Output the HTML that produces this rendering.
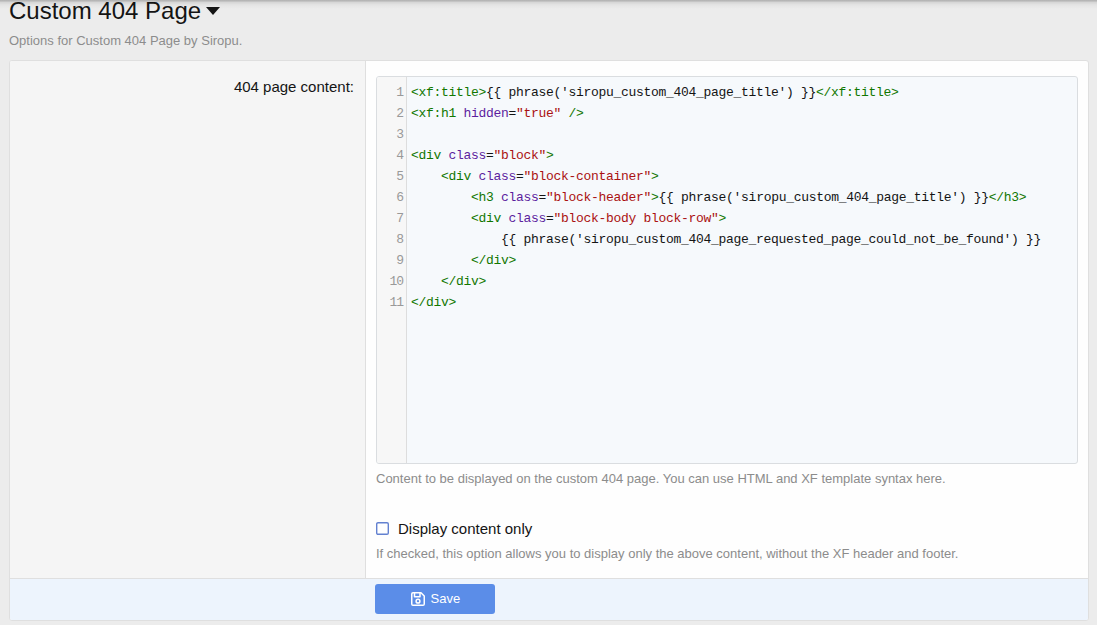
<!DOCTYPE html>
<html><head><meta charset="utf-8">
<style>
*{box-sizing:border-box;margin:0;padding:0}
html,body{width:1097px;height:625px;overflow:hidden}
body{background:#ececec;font-family:"Liberation Sans",sans-serif;color:#141414;position:relative}
.shadow{position:absolute;left:0;top:0;width:1097px;height:10px;background:linear-gradient(rgba(0,0,0,.23) 0.5px,rgba(0,0,0,.17) 1.5px,rgba(0,0,0,.09) 2.5px,rgba(0,0,0,.045) 4.5px,rgba(0,0,0,.02) 6.5px,rgba(0,0,0,0) 9px);z-index:5}
.title{position:absolute;left:9px;top:-4px;font-size:24px;line-height:30px;color:#141414;white-space:nowrap}
.caret{display:inline-block;width:0;height:0;border-left:7px solid transparent;border-right:7px solid transparent;border-top:8px solid #141414;vertical-align:middle;margin-left:5px;position:relative;top:-2px}
.desc{position:absolute;left:9px;top:32px;font-size:13px;line-height:18px;color:#8c8c8c;white-space:nowrap}
.block{position:absolute;left:9px;top:60px;width:1080px;height:561px;border:1px solid #dfdfdf;border-radius:3px;background:#fefefe;overflow:hidden}
.dt{position:absolute;left:0;top:0;width:356px;height:517px;background:#f5f5f5;border-right:1px solid #dfdfdf}
.label{position:absolute;right:11px;top:16px;font-size:15px;line-height:20px;color:#141414;white-space:nowrap}
.editor{position:absolute;left:366px;top:15px;width:702px;height:388px;border:1px solid #dadde0;border-radius:3px;background:#f6f9fc;overflow:hidden}
.gutter{position:absolute;left:0;top:0;width:30px;height:100%;background:#f7f7f7;border-right:1px solid #dddddd}
.ln{position:absolute;right:3px;top:5px;text-align:right;font-family:"Liberation Mono",monospace;font-size:13px;letter-spacing:-1px;line-height:21px;color:#999}
.code{position:absolute;left:34px;top:5px;font-family:"Liberation Mono",monospace;font-size:13px;letter-spacing:-0.3px;line-height:21px;color:#141414;white-space:pre}
.t{color:#170}.a{color:#5c1e9e}.s{color:#a11}
.explain{position:absolute;font-size:13px;line-height:18px;color:#8c8c8c;white-space:nowrap}
.chk{position:absolute;left:366px;top:461px;width:13px;height:13px}
.chklabel{position:absolute;left:388px;top:458px;font-size:15px;line-height:20px;color:#141414;white-space:nowrap}
.footer{position:absolute;left:0;top:517px;width:100%;height:44px;background:#edf4fd;border-top:1px solid #dfdfdf}
.btn{position:absolute;left:365px;top:5px;width:120px;height:30px;background:#5b8de8;border-radius:3px;color:#fff;font-size:13px;line-height:30px}
</style></head><body>
<div class="shadow"></div>
<div class="title">Custom 404 Page<span class="caret"></span></div>
<div class="desc">Options for Custom 404 Page by Siropu.</div>
<div class="block">
 <div class="dt"><div class="label">404 page content:</div></div>
 <div class="editor">
  <div class="gutter"><div class="ln"><div>1</div><div>2</div><div>3</div><div>4</div><div>5</div><div>6</div><div>7</div><div>8</div><div>9</div><div>10</div><div>11</div></div></div>
<div class="code"><span class="t">&lt;xf:title&gt;</span>{{ phrase('siropu_custom_404_page_title') }}<span class="t">&lt;/xf:title&gt;</span>
<span class="t">&lt;xf:h1 </span><span class="a">hidden</span>=<span class="s">"true"</span> <span class="t">/&gt;</span>

<span class="t">&lt;div </span><span class="a">class</span>=<span class="s">"block"</span><span class="t">&gt;</span>
    <span class="t">&lt;div </span><span class="a">class</span>=<span class="s">"block-container"</span><span class="t">&gt;</span>
        <span class="t">&lt;h3 </span><span class="a">class</span>=<span class="s">"block-header"</span><span class="t">&gt;</span>{{ phrase('siropu_custom_404_page_title') }}<span class="t">&lt;/h3&gt;</span>
        <span class="t">&lt;div </span><span class="a">class</span>=<span class="s">"block-body block-row"</span><span class="t">&gt;</span>
            {{ phrase('siropu_custom_404_page_requested_page_could_not_be_found') }}
        <span class="t">&lt;/div&gt;</span>
    <span class="t">&lt;/div&gt;</span>
<span class="t">&lt;/div&gt;</span></div>
 </div>
 <div class="explain" style="left:366px;top:409px">Content to be displayed on the custom 404 page. You can use HTML and XF template syntax here.</div>
 <svg class="chk" width="13" height="13" viewBox="0 0 13 13"><rect x="0.7" y="0.7" width="11.6" height="11.6" rx="1.3" fill="#fff" stroke="#6381d0" stroke-width="1.4"/></svg>
 <div class="chklabel">Display content only</div>
 <div class="explain" style="left:366px;top:484px">If checked, this option allows you to display only the above content, without the XF header and footer.</div>
 <div class="footer"><div class="btn"><svg style="position:absolute;left:36px;top:8px" width="14" height="14" viewBox="0 0 14 14" fill="none" stroke="#fff" stroke-width="1.5" stroke-linejoin="round"><path d="M0.75,2 Q0.75,0.75 2,0.75 L10,0.75 L13.25,4 L13.25,12 Q13.25,13.25 12,13.25 L2,13.25 Q0.75,13.25 0.75,12 Z"/><path d="M3.5,0.75 V4.75 H9 V0.75"/><circle cx="7" cy="9.2" r="1.9"/></svg><span style="position:absolute;left:55.5px;top:0">Save</span></div></div>
</div>
</body></html>
